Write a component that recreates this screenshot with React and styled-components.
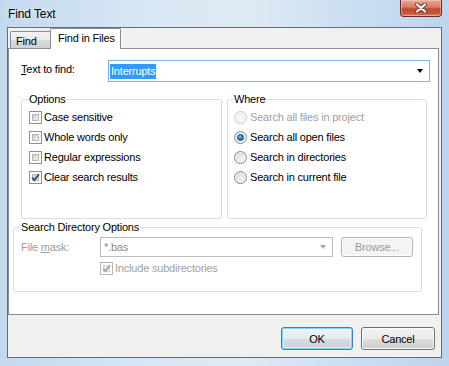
import styled, { createGlobalStyle } from "styled-components";

const GlobalStyle = createGlobalStyle`
  html, body {
    margin: 0;
    padding: 0;
    overflow: hidden;
    background: #bcd3ea;
  }
  * {
    box-sizing: border-box;
  }
`;

const FONT = `"Liberation Sans", Arial, sans-serif`;

const Window = styled.div`
  width: 449px;
  height: 366px;
  display: flex;
  flex-direction: column;
  background: linear-gradient(
    to right,
    #c3d9ee 0%,
    #d9e8f5 35%,
    #dfeaf4 55%,
    #c9def1 80%,
    #bcd5ec 100%
  );
  font-family: ${FONT};
  font-size: 11px;
  letter-spacing: -0.2px;
  color: #000;
`;

const TitleBar = styled.div`
  height: 27px;
  display: flex;
  align-items: flex-start;
  justify-content: space-between;
  padding: 0 7px 0 8px;
  flex-shrink: 0;
`;

const TitleText = styled.div`
  font-size: 12px;
  letter-spacing: -0.1px;
  padding-top: 7px;
  text-shadow: 0 0 6px rgba(255, 255, 255, 0.9);
`;

const CloseButton = styled.div`
  width: 42px;
  height: 17px;
  border: 1px solid #6b2a1e;
  border-top: none;
  border-radius: 0 0 4px 4px;
  background: linear-gradient(
    to bottom,
    #e9a998 0%,
    #d77a64 45%,
    #c04a2f 55%,
    #c9583a 85%,
    #dc8a6a 100%
  );
  box-shadow: inset 0 0 0 1px rgba(255, 220, 210, 0.45);
  display: flex;
  align-items: center;
  justify-content: center;
`;

const Client = styled.div`
  margin: 0 7px 8px 7px;
  flex: 1;
  border: 1px solid #5d6f82;
  background: #f0f0f0;
  display: flex;
  flex-direction: column;
`;

const TabStrip = styled.div`
  height: 20px;
  display: flex;
  align-items: flex-end;
  padding-left: 2px;
  position: relative;
  z-index: 1;
`;

const Tab = styled.div`
  height: ${(p) => (p.$active ? "21px" : "17px")};
  width: ${(p) => (p.$active ? "71px" : "41px")};
  margin-bottom: ${(p) => (p.$active ? "-1px" : "0")};
  margin-left: ${(p) => (p.$active ? "-1px" : "0")};
  border: 1px solid #898c95;
  border-bottom: none;
  border-radius: 2px 2px 0 0;
  background: ${(p) =>
    p.$active
      ? "#ffffff"
      : "linear-gradient(to bottom, #f3f3f3 0%, #ebebeb 50%, #dddddd 50%, #cfcfcf 100%)"};
  padding: ${(p) => (p.$active ? "3px 0 0 7px" : "3px 0 0 5px")};
`;

const Panel = styled.div`
  width: 431px;
  height: 267px;
  border: 1px solid #898c95;
  background: #fff;
  padding-top: 11px;
  display: flex;
  flex-direction: column;
`;

const FindRow = styled.div`
  display: flex;
  align-items: center;
  margin: 0 8px 0 12px;
  height: 22px;
`;

const FieldLabel = styled.div`
  width: ${(p) => p.$width}px;
  flex-shrink: 0;
  color: ${(p) => (p.$disabled ? "#9d9d9d" : "#000")};
  padding-bottom: ${(p) => p.$lift || 0}px;
`;

const Underline = styled.span`
  text-decoration: underline;
`;

const Combo = styled.div`
  flex: ${(p) => (p.$width ? "none" : "1")};
  width: ${(p) => (p.$width ? `${p.$width}px` : "auto")};
  height: ${(p) => p.$height}px;
  border: 1px solid ${(p) => (p.$disabled ? "#bcbcbc" : "#7eb4ea")};
  background: #fff;
  display: flex;
  align-items: center;
  padding: 0 6px 0 1px;
`;

const ComboText = styled.div`
  flex: 1;
  color: ${(p) => (p.$disabled ? "#8a8a8a" : "#000")};
  padding-left: ${(p) => (p.$disabled ? "2px" : "0")};
`;

const Selection = styled.span`
  background: #3399ff;
  color: #fff;
  padding: 1px 1px 2px 1px;
`;

const Arrow = styled.div`
  width: 0;
  height: 0;
  border-left: 3.5px solid transparent;
  border-right: 3.5px solid transparent;
  border-top: 4px solid ${(p) => (p.$disabled ? "#a8a8a8" : "#000")};
`;

const GroupsRow = styled.div`
  display: grid;
  grid-template-columns: 201px 200px;
  column-gap: 5px;
  margin: 11px 0 0 12px;
`;

const Group = styled.fieldset`
  margin: ${(p) => p.$margin || "0"};
  width: ${(p) => (p.$width ? `${p.$width}px` : "auto")};
  height: ${(p) => p.$height}px;
  min-width: 0;
  border: 1px solid #d5dfe5;
  border-radius: 3px;
  padding: ${(p) => p.$padding};
`;

const Legend = styled.legend`
  padding: 0;
  line-height: 13px;
  height: 13px;
  color: #000;
`;

const OptionRow = styled.div`
  height: 20px;
  display: flex;
  align-items: center;
  gap: ${(p) => p.$gap || 3}px;
  color: ${(p) => (p.$disabled ? "#a0a0a0" : "#000")};
  margin-top: ${(p) => p.$top || 0}px;
  margin-left: ${(p) => p.$indent || 0}px;
`;

const Box = styled.div`
  width: 13px;
  height: 13px;
  flex-shrink: 0;
  border: 1px solid ${(p) => (p.$disabled ? "#b5b5b5" : "#8f8f8f")};
  background: #fff;
  padding: 2px;
  display: flex;
`;

const BoxInner = styled.div`
  flex: 1;
  position: relative;
  background: ${(p) =>
    p.$disabled
      ? "linear-gradient(135deg, #e6e6e6, #f6f6f6)"
      : "linear-gradient(135deg, #c9c9c9 0%, #e2e2e2 55%, #f4f4f4 100%)"};
  border: 1px solid ${(p) => (p.$disabled ? "#d6d6d6" : "#b8b8b8")};
`;

const CheckMark = styled.svg`
  position: absolute;
  left: -3px;
  top: -3px;
`;

const RadioCircle = styled.div`
  width: 13px;
  height: 13px;
  flex-shrink: 0;
  border-radius: 50%;
  border: 1px solid ${(p) => (p.$disabled ? "#c9c9c9" : "#8a8a8a")};
  background: ${(p) =>
    p.$disabled
      ? "radial-gradient(circle at 60% 65%, #fafafa 0%, #eeeeee 60%, #e6e6e6 100%)"
      : "radial-gradient(circle at 62% 68%, #f7f7f7 0%, #e4e4e4 45%, #c9c9c9 100%)"};
  box-shadow: inset 0 0 0 1px rgba(255, 255, 255, 0.7);
  display: flex;
  align-items: center;
  justify-content: center;
`;

const RadioDot = styled.div`
  width: 7px;
  height: 7px;
  border-radius: 50%;
  background: radial-gradient(circle at 40% 35%, #8fd0ff 0%, #2a8ad8 40%, #0b4f8f 100%);
  border: 1px solid #1b4f7d;
`;

const DirRow = styled.div`
  display: flex;
  align-items: center;
  height: 20px;
`;

const Button = styled.div`
  width: ${(p) => p.$width}px;
  height: ${(p) => p.$height}px;
  margin-left: ${(p) => p.$left || 0}px;
  border: 1px solid ${(p) => (p.$disabled ? "#b4b7b9" : p.$default ? "#3c7fb1" : "#707070")};
  border-radius: 3px;
  background: ${(p) =>
    p.$disabled
      ? "#f4f4f4"
      : p.$default
      ? "linear-gradient(to bottom, #eef3f6 0%, #e6ecef 50%, #d6dde2 50%, #c9d2d8 100%)"
      : "linear-gradient(to bottom, #f2f2f2 0%, #ebebeb 50%, #dddddd 50%, #cfcfcf 100%)"};
  box-shadow: ${(p) =>
    p.$default ? "inset 0 0 0 1px #7fd6f5, inset 0 0 0 2px rgba(255,255,255,0.5)" : "inset 0 0 0 1px #fcfcfc"};
  color: ${(p) => (p.$disabled ? "#9a9a9a" : "#000")};
  display: flex;
  align-items: center;
  justify-content: center;
`;

const ButtonRow = styled.div`
  display: flex;
  justify-content: flex-end;
  gap: 8px;
  margin-top: 12px;
  padding-right: 6px;
`;

function CloseGlyph() {
  return (
    <svg width="14" height="10" viewBox="0 0 14 10">
      <path d="M3 1.5 L11 8.5 M11 1.5 L3 8.5" stroke="#5a3a33" strokeWidth="4" strokeLinecap="round" />
      <path d="M3 1.5 L11 8.5 M11 1.5 L3 8.5" stroke="#ffffff" strokeWidth="2.2" strokeLinecap="round" />
    </svg>
  );
}

function Checkbox({ label, checked, disabled, top, indent }) {
  return (
    <OptionRow $disabled={disabled} $gap={2} $top={top} $indent={indent}>
      <Box $disabled={disabled}>
        <BoxInner $disabled={disabled}>
          {checked && (
            <CheckMark width="11" height="11" viewBox="0 0 11 11">
              <path
                d="M2.2 5.6 L4.4 8.2 L9 2.4"
                fill="none"
                stroke={disabled ? "#a6a6a6" : "#3d5283"}
                strokeWidth="1.9"
              />
            </CheckMark>
          )}
        </BoxInner>
      </Box>
      <span>{label}</span>
    </OptionRow>
  );
}

function Radio({ label, checked, disabled }) {
  return (
    <OptionRow $disabled={disabled} $gap={3}>
      <RadioCircle $disabled={disabled}>{checked && <RadioDot />}</RadioCircle>
      <span>{label}</span>
    </OptionRow>
  );
}

export default function App() {
  return (
    <>
      <GlobalStyle />
      <Window>
        <TitleBar>
          <TitleText>Find Text</TitleText>
          <CloseButton>
            <CloseGlyph />
          </CloseButton>
        </TitleBar>
        <Client>
          <TabStrip>
            <Tab>Find</Tab>
            <Tab $active>Find in Files</Tab>
          </TabStrip>
          <Panel>
            <FindRow>
              <FieldLabel $width={87} $lift={4}>
                <Underline>T</Underline>ext to find:
              </FieldLabel>
              <Combo $height={22}>
                <ComboText>
                  <Selection>Interrupts</Selection>
                </ComboText>
                <Arrow />
              </Combo>
            </FindRow>

            <GroupsRow>
              <Group $height={126} $padding="1px 7px 0 7px">
                <Legend>Options</Legend>
                <Checkbox label="Case sensitive" />
                <Checkbox label="Whole words only" />
                <Checkbox label="Regular expressions" />
                <Checkbox label="Clear search results" checked />
              </Group>
              <Group $height={126} $padding="1px 6px 0 6px">
                <Legend>Where</Legend>
                <Radio label="Search all files in project" disabled />
                <Radio label="Search all open files" checked />
                <Radio label="Search in directories" />
                <Radio label="Search in current file" />
              </Group>
            </GroupsRow>

            <Group $margin="2px 0 0 4px" $width={409} $height={71} $padding="3px 7px 0 7px">
              <Legend>Search Directory Options</Legend>
              <DirRow>
                <FieldLabel $width={79} $disabled>
                  File <Underline>m</Underline>ask:
                </FieldLabel>
                <Combo $width={233} $height={20} $disabled>
                  <ComboText $disabled>*.bas</ComboText>
                  <Arrow $disabled />
                </Combo>
                <Button $width={72} $height={20} $left={8} $disabled>
                  Browse...
                </Button>
              </DirRow>
              <Checkbox label="Include subdirectories" checked disabled top={1} indent={79} />
            </Group>
          </Panel>
          <ButtonRow>
            <Button $width={72} $height={23} $default>
              OK
            </Button>
            <Button $width={74} $height={23}>
              Cancel
            </Button>
          </ButtonRow>
        </Client>
      </Window>
    </>
  );
}
